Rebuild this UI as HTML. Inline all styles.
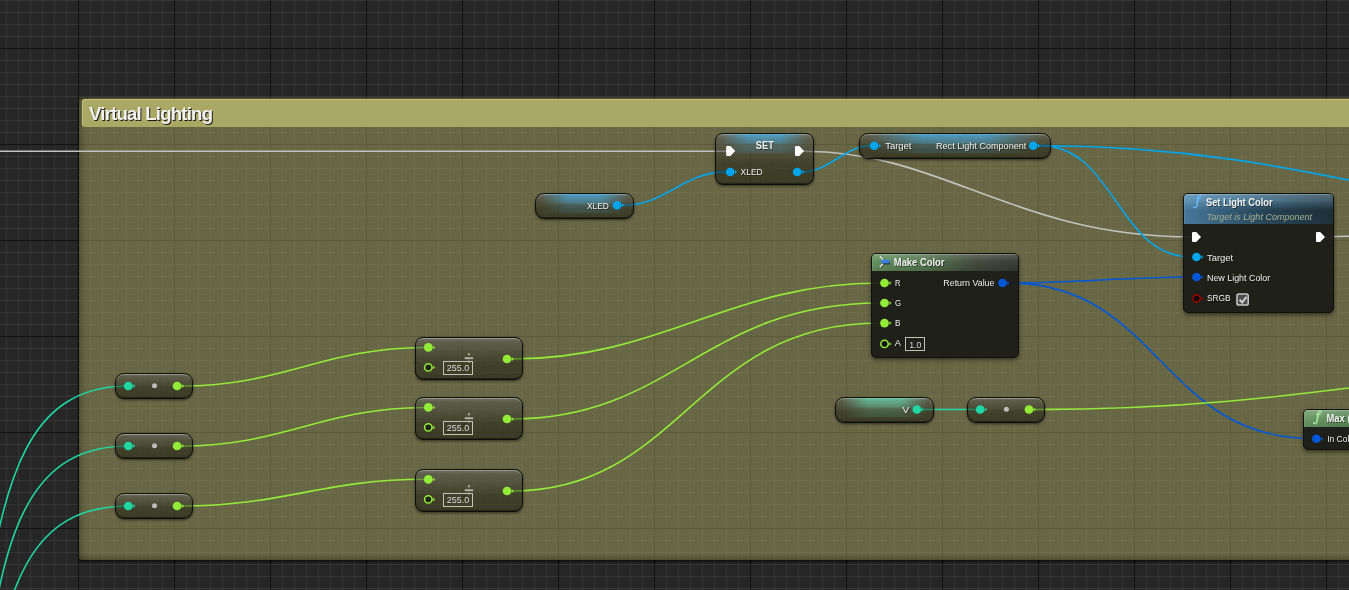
<!DOCTYPE html>
<html><head><meta charset="utf-8"><title>Virtual Lighting</title>
<style>
*{box-sizing:border-box;margin:0;padding:0}
html,body{width:1349px;height:590px;overflow:hidden;background:#262626}
body{position:relative;font-family:"Liberation Sans",sans-serif;color:#e8e8e8}
#grid{position:absolute;left:0;top:0;width:1349px;height:590px;
 background-image:
  linear-gradient(to right,#111 1px,transparent 1px),
  linear-gradient(to bottom,#111 1px,transparent 1px),
  linear-gradient(to right,#353535 1px,transparent 1px),
  linear-gradient(to bottom,#353535 1px,transparent 1px);
 background-size:96px 96px,96px 96px,12px 12px,12px 12px;
 background-position:78px 0,0 48px,6px 0,0 0}
#comment{position:absolute;left:79px;top:97px;width:1290px;height:463px;background:rgba(170,168,100,0.5);
 border-radius:3px;box-shadow:0 2px 3px rgba(0,0,0,.6),inset 7px 0 8px -5px rgba(0,0,0,.28),inset 0 -6px 6px -4px rgba(0,0,0,.3),inset 0 3px 2px -1px rgba(0,0,0,.35)}
#chead{position:absolute;left:3px;top:2px;right:0;height:28px;background:#aaa865;border-radius:3px 0 0 3px;box-shadow:inset 1px 1px 0 rgba(255,255,160,.3)}
#ctitle{position:absolute;left:10px;top:5.5px;font-weight:bold;font-size:18.6px;color:#f2f2f2;text-shadow:1px 1px 0 #1a1a1a;white-space:nowrap;letter-spacing:-0.8px;line-height:21px}
.node{position:absolute;overflow:hidden;border:1px solid #0e0e0c;box-shadow:0 1px 3px rgba(0,0,0,.55)}
.cn{background:linear-gradient(to bottom,rgba(255,255,255,.26) 0,rgba(255,255,255,.15) 10%,rgba(255,255,255,.07) 38%,rgba(255,255,255,0) 60%,rgba(0,0,0,.1) 100%),rgba(15,15,10,.44);
 box-shadow:0 1px 3px rgba(0,0,0,.55), inset 0 1px 0 rgba(255,255,255,.28), inset 0 -1px 1px rgba(0,0,0,.4)}
.glow{position:absolute;left:0;right:0;top:0;height:20px;
 background:linear-gradient(to bottom,rgba(var(--g),.75) 0,rgba(var(--g),.42) 46%,rgba(var(--g),.22) 50%,rgba(var(--g),.15) 92%,rgba(var(--g),0) 100%);
 -webkit-mask-image:linear-gradient(to right,transparent 5%,#000 33%,#000 67%,transparent 95%);mask-image:linear-gradient(to right,transparent 5%,#000 33%,#000 67%,transparent 95%)}
.fn{border-radius:5px;background:rgba(26,27,22,.93);box-shadow:0 2px 4px rgba(0,0,0,.5)}
.hd{position:absolute;left:0;top:0;right:0;box-shadow:inset 0 1px 0 rgba(255,255,255,.22),inset 1px 0 0 rgba(255,255,255,.08)}
.hblue{background:linear-gradient(to bottom,rgba(255,255,255,.18) 0,rgba(255,255,255,.05) 35%,rgba(255,255,255,0) 52%),linear-gradient(to right,#5088ae 0,#41718f 40%,#35586d 75%,#2f4957 100%)}
.hblue::after{content:"";position:absolute;left:0;top:0;right:0;bottom:0;background:linear-gradient(to bottom,rgba(0,0,0,0) 22%,rgba(0,0,0,.36) 56%,rgba(0,0,0,.3) 100%);-webkit-mask-image:linear-gradient(to right,rgba(0,0,0,.3) 0,#000 55%);mask-image:linear-gradient(to right,rgba(0,0,0,.3) 0,#000 55%)}
.hgreen{background:linear-gradient(to bottom,rgba(255,255,255,.18) 0,rgba(255,255,255,.02) 45%,rgba(0,0,0,.12) 100%),linear-gradient(to right,#63905f 0,#55784f 35%,rgba(70,78,64,.9) 70%,rgba(58,60,54,.9) 100%)}
.hgreen2{background:linear-gradient(to bottom,rgba(255,255,255,.18) 0,rgba(255,255,255,.02) 45%,rgba(0,0,0,.12) 100%),linear-gradient(to right,#6c9a66 0,#5b8557 100%)}
svg{position:absolute;left:0;top:0;overflow:hidden}
svg text{font-family:"Liberation Sans",sans-serif;white-space:pre}
#ctitle{will-change:transform}
svg text.sh{text-shadow:1px 1px 0 rgba(0,0,0,.45)}
.ov{will-change:transform}
svg text.fi{font-family:"DejaVu Serif",serif;font-style:italic;font-size:12.5px}
</style></head><body>
<div id="grid"></div>
<div id="comment"><div id="chead"></div><div id="ctitle">Virtual Lighting</div></div>
<svg width="1349" height="590" viewBox="0 0 1349 590" fill="none" stroke-linecap="round">
<path d="M-2,151.2 L728,151.2" stroke="#c2c2c0" stroke-width="1.6"/>
<path d="M801.0,151.2 L804.0,151.2 C942.7,151.2 1014.5,236.8 1192.0,236.8 L1195.0,236.8" stroke="#c2c2c0" stroke-width="1.6"/>
<path d="M1322,236.8 L1351,236.2" stroke="#c2c2c0" stroke-width="1.6"/>
<path d="M621.0,205.2 L624.0,205.2 C666.0,205.2 683.6,171.9 725.6,171.9 L728.6,171.9" stroke="#00a4ea" stroke-width="1.6"/>
<path d="M800.0,171.8 L803.0,171.8 C828.8,171.8 845.2,145.7 871.0,145.7 L874.0,145.7" stroke="#00a4ea" stroke-width="1.6"/>
<path d="M1037.0,145.6 L1040.0,145.6 C1115.5,145.6 1116.5,257.0 1192.0,257.0 L1195.0,257.0" stroke="#00a4ea" stroke-width="1.6"/>
<path d="M1037.0,145.6 L1040.0,145.6 C1330.3,145.6 1467.4,235.2 1757.7,235.2 L1760.7,235.2" stroke="#00a4ea" stroke-width="1.6"/>
<path d="M1006.5,283.0 L1009.5,283.0 C1069.5,283.0 1132.0,277.0 1192.0,277.0 L1195.0,277.0" stroke="#0058d6" stroke-width="1.6"/>
<path d="M1006.0,283.0 L1009.0,283.0 C1158.8,283.0 1162.2,438.5 1312.0,438.5 L1315.0,438.5" stroke="#0058d6" stroke-width="1.6"/>
<path d="M509.0,359.0 L512.0,359.0 C662.4,359.0 729.6,283.0 880.0,283.0 L883.0,283.0" stroke="#94ea38" stroke-width="1.6"/>
<path d="M509.0,419.0 L512.0,419.0 C672.4,419.0 705.3,303.0 880.0,303.0 L883.0,303.0" stroke="#94ea38" stroke-width="1.6"/>
<path d="M509.0,491.0 L512.0,491.0 C680.9,491.0 695.5,323.0 880.0,323.0 L883.0,323.0" stroke="#94ea38" stroke-width="1.6"/>
<path d="M179.6,386.0 L182.6,386.0 C282.2,386.0 324.9,347.5 424.5,347.5 L427.5,347.5" stroke="#94ea38" stroke-width="1.6"/>
<path d="M179.6,446.0 L182.6,446.0 C282.2,446.0 324.9,407.5 424.5,407.5 L427.5,407.5" stroke="#94ea38" stroke-width="1.6"/>
<path d="M179.6,506.0 L182.6,506.0 C282.2,506.0 324.9,479.2 424.5,479.2 L427.5,479.2" stroke="#94ea38" stroke-width="1.6"/>
<path d="M1031.0,409.6 L1034.0,409.6 C1326.7,409.6 1439.2,358.0 1731.9,358.0 L1734.9,358.0" stroke="#94ea38" stroke-width="1.6"/>
<path d="M-155.5,795.3 L-152.5,795.3 C50.2,795.3 -76.7,386.2 126.0,386.2 L129.0,386.2" stroke="#1fd6a4" stroke-width="1.6"/>
<path d="M-155.0,864.0 L-152.0,864.0 C56.3,864.0 -82.3,446.2 126.0,446.2 L129.0,446.2" stroke="#1fd6a4" stroke-width="1.6"/>
<path d="M-147.4,848.0 L-144.4,848.0 C49.8,848.0 -68.2,506.2 126.0,506.2 L129.0,506.2" stroke="#1fd6a4" stroke-width="1.6"/>
<path d="M920,409.5 L978,409.5" stroke="#1fd6a4" stroke-width="1.6"/>
</svg>
<div class="node cn " style="left:715px;top:133px;width:99px;height:52px;border-radius:8px"><div class="glow" style="--g:70,175,230"></div></div>
<div class="node cn " style="left:535px;top:193px;width:99px;height:26px;border-radius:9px"><div class="glow" style="--g:70,175,230"></div></div>
<div class="node cn " style="left:859px;top:133px;width:192px;height:26px;border-radius:9px"><div class="glow" style="--g:70,175,230"></div></div>
<div class="node fn" style="left:1183px;top:193px;width:151px;height:120px"><div class="hd hblue" style="height:30px"></div></div>
<div class="node fn" style="left:871px;top:253px;width:148px;height:105px"><div class="hd hgreen" style="height:17px"></div></div>
<div class="node cn " style="left:415px;top:337px;width:108px;height:43px;border-radius:8px"></div>
<div class="node cn " style="left:415px;top:397px;width:108px;height:43px;border-radius:8px"></div>
<div class="node cn " style="left:415px;top:469px;width:108px;height:43px;border-radius:8px"></div>
<div class="node cn " style="left:115px;top:373px;width:78px;height:26px;border-radius:9px"></div>
<div class="node cn " style="left:115px;top:433px;width:78px;height:26px;border-radius:9px"></div>
<div class="node cn " style="left:115px;top:493px;width:78px;height:26px;border-radius:9px"></div>
<div class="node cn " style="left:835px;top:397px;width:99px;height:26px;border-radius:9px"><div class="glow" style="--g:105,215,180"></div></div>
<div class="node cn " style="left:967px;top:397px;width:78px;height:26px;border-radius:9px"></div>
<div class="node fn" style="left:1303px;top:409px;width:60px;height:41px"><div class="hd hgreen2" style="height:17px"></div></div>
<svg class="ov" width="1349" height="590" viewBox="0 0 1349 590">
<path d="M727.2,146.0 h3.2 l4.8,5 l-4.8,5 h-3.2 a1,1 0 0 1 -1,-1 v-8 a1,1 0 0 1 1,-1z" fill="#fff"/>
<path d="M796.0,146.0 h3.2 l4.8,5 l-4.8,5 h-3.2 a1,1 0 0 1 -1,-1 v-8 a1,1 0 0 1 1,-1z" fill="#fff"/>
<text class="sh" x="755.8" y="148.7" font-size="10.2" font-weight="bold" font-style="normal" fill="#f0f0f0" textLength="18.0" lengthAdjust="spacingAndGlyphs">SET</text>
<path d="M735.0,170.1 L737.3,172.0 L735.0,173.9Z" fill="#00a4ea" opacity=".85"/><ellipse cx="730.2" cy="172" rx="4.4" ry="4.3" fill="#00a4ea"/>
<path d="M802.0,170.1 L804.3,172.0 L802.0,173.9Z" fill="#00a4ea" opacity=".85"/><ellipse cx="797.2" cy="172" rx="4.4" ry="4.3" fill="#00a4ea"/>
<text class="sh" x="740.6" y="174.8" font-size="9.5" font-weight="normal" font-style="normal" fill="#f0f0f0" textLength="22.1" lengthAdjust="spacingAndGlyphs">XLED</text>
<text class="sh" x="587.0" y="208.8" font-size="9.5" font-weight="normal" font-style="normal" fill="#f0f0f0" textLength="21.9" lengthAdjust="spacingAndGlyphs">XLED</text>
<path d="M621.9,203.3 L624.2,205.2 L621.9,207.1Z" fill="#00a4ea" opacity=".85"/><ellipse cx="617.1" cy="205.2" rx="4.4" ry="4.3" fill="#00a4ea"/>
<path d="M879.0,143.9 L881.3,145.8 L879.0,147.7Z" fill="#00a4ea" opacity=".85"/><ellipse cx="874.2" cy="145.8" rx="4.4" ry="4.3" fill="#00a4ea"/>
<text class="sh" x="885.2" y="149.4" font-size="9.5" font-weight="normal" font-style="normal" fill="#f0f0f0" textLength="26.2" lengthAdjust="spacingAndGlyphs">Target</text>
<text class="sh" x="936.0" y="149.4" font-size="9.5" font-weight="normal" font-style="normal" fill="#f0f0f0" textLength="90.3" lengthAdjust="spacingAndGlyphs">Rect Light Component</text>
<path d="M1038.0,143.9 L1040.3,145.8 L1038.0,147.7Z" fill="#00a4ea" opacity=".85"/><ellipse cx="1033.2" cy="145.8" rx="4.4" ry="4.3" fill="#00a4ea"/>
<text x="1195.4" y="205" class="fi" fill="#6cbcf5" stroke="#6cbcf5" stroke-width=".4">ƒ</text>
<text class="sh" x="1206.0" y="205.8" font-size="10.5" font-weight="bold" font-style="normal" fill="#f0f0f0" textLength="66.5" lengthAdjust="spacingAndGlyphs">Set Light Color</text>
<text x="1206.6" y="220.3" font-size="9.7" font-weight="normal" font-style="italic" fill="#a6ae92" textLength="105.4" lengthAdjust="spacingAndGlyphs">Target is Light Component</text>
<path d="M1193.0,232.0 h3.2 l4.8,5 l-4.8,5 h-3.2 a1,1 0 0 1 -1,-1 v-8 a1,1 0 0 1 1,-1z" fill="#fff"/>
<path d="M1317.0,232.0 h3.2 l4.8,5 l-4.8,5 h-3.2 a1,1 0 0 1 -1,-1 v-8 a1,1 0 0 1 1,-1z" fill="#fff"/>
<path d="M1201.3,255.1 L1203.6,257.0 L1201.3,258.9Z" fill="#00a4ea" opacity=".85"/><ellipse cx="1196.5" cy="257" rx="4.4" ry="4.3" fill="#00a4ea"/>
<text class="sh" x="1207.0" y="260.9" font-size="9.5" font-weight="normal" font-style="normal" fill="#f0f0f0" textLength="26.2" lengthAdjust="spacingAndGlyphs">Target</text>
<path d="M1201.3,275.1 L1203.6,277.0 L1201.3,278.9Z" fill="#0058d6" opacity=".85"/><ellipse cx="1196.5" cy="277" rx="4.4" ry="4.3" fill="#0058d6"/>
<text class="sh" x="1207.0" y="281.0" font-size="9.5" font-weight="normal" font-style="normal" fill="#f0f0f0" textLength="63.2" lengthAdjust="spacingAndGlyphs">New Light Color</text>
<path d="M1201.3,296.6 L1203.6,298.5 L1201.3,300.4Z" fill="#960000" opacity=".85"/><ellipse cx="1196.5" cy="298.5" rx="3.7" ry="3.6" fill="#0a0a0a" stroke="#960000" stroke-width="1.6"/>
<text class="sh" x="1207.0" y="301.0" font-size="9.5" font-weight="normal" font-style="normal" fill="#f0f0f0" textLength="23.7" lengthAdjust="spacingAndGlyphs">SRGB</text>
<rect x="1237" y="294" width="11.2" height="11" rx="1.8" fill="#4e4e4e" stroke="#c6c6c6" stroke-width="1.6"/><path d="M1239.6,299.6 l2.6,2.9 l4.2,-5.6" stroke="#d0d0d0" stroke-width="2" fill="none" stroke-linecap="butt"/>
<rect x="881.8" y="261" width="8.2" height="3.6" rx="1.2" fill="rgba(0,0,0,.55)"/><path d="M880.6,257.2 L883.4,260.6 M880.7,267.6 L883.5,264.6" stroke="rgba(0,0,0,.6)" stroke-width="1.4"/><path d="M880,256.4 L882.9,259.8 M880.1,266.9 L883,263.8" stroke="#f2f2f2" stroke-width="1.4"/><rect x="881.3" y="259.8" width="8.2" height="3.4" rx="1.3" fill="#3a80ee"/>
<text class="sh" x="893.8" y="265.8" font-size="10.3" font-weight="bold" font-style="normal" fill="#f0f0f0" textLength="50.7" lengthAdjust="spacingAndGlyphs">Make Color</text>
<path d="M889.3,281.1 L891.6,283.0 L889.3,284.9Z" fill="#94ea38" opacity=".85"/><ellipse cx="884.5" cy="283" rx="4.4" ry="4.3" fill="#94ea38"/>
<text class="sh" x="895.0" y="285.9" font-size="9.5" font-weight="normal" font-style="normal" fill="#f0f0f0" textLength="5.5" lengthAdjust="spacingAndGlyphs">R</text>
<path d="M889.3,301.1 L891.6,303.0 L889.3,304.9Z" fill="#94ea38" opacity=".85"/><ellipse cx="884.5" cy="303" rx="4.4" ry="4.3" fill="#94ea38"/>
<text class="sh" x="895.0" y="305.9" font-size="9.5" font-weight="normal" font-style="normal" fill="#f0f0f0" textLength="6.1" lengthAdjust="spacingAndGlyphs">G</text>
<path d="M889.3,321.2 L891.6,323.1 L889.3,325.0Z" fill="#94ea38" opacity=".85"/><ellipse cx="884.5" cy="323.1" rx="4.4" ry="4.3" fill="#94ea38"/>
<text class="sh" x="895.0" y="326.0" font-size="9.5" font-weight="normal" font-style="normal" fill="#f0f0f0" textLength="5.5" lengthAdjust="spacingAndGlyphs">B</text>
<path d="M889.3,342.0 L891.6,343.9 L889.3,345.8Z" fill="#94ea38" opacity=".85"/><ellipse cx="884.5" cy="343.9" rx="3.7" ry="3.6" fill="#111" stroke="#94ea38" stroke-width="1.6"/>
<text class="sh" x="894.8" y="345.8" font-size="9.5" font-weight="normal" font-style="normal" fill="#f0f0f0" textLength="6.2" lengthAdjust="spacingAndGlyphs">A</text>
<rect x="905.5" y="337.5" width="19" height="13" fill="none" stroke="#c2c2b8" stroke-width="1"/>
<text x="909.2" y="347.8" font-size="9" font-weight="normal" font-style="normal" fill="#d6d6d6" textLength="12.2" lengthAdjust="spacingAndGlyphs">1.0</text>
<text class="sh" x="943.3" y="286.0" font-size="9.5" font-weight="normal" font-style="normal" fill="#f0f0f0" textLength="51.2" lengthAdjust="spacingAndGlyphs">Return Value</text>
<path d="M1007.3,281.1 L1009.6,283.0 L1007.3,284.9Z" fill="#0058d6" opacity=".85"/><ellipse cx="1002.5" cy="283" rx="4.4" ry="4.3" fill="#0058d6"/>
<path d="M433.1,345.5 L435.4,347.4 L433.1,349.3Z" fill="#94ea38" opacity=".85"/><ellipse cx="428.3" cy="347.4" rx="4.4" ry="4.3" fill="#94ea38"/>
<path d="M433.1,365.5 L435.4,367.4 L433.1,369.3Z" fill="#94ea38" opacity=".85"/><ellipse cx="428.3" cy="367.4" rx="3.7" ry="3.6" fill="#22231c" stroke="#94ea38" stroke-width="1.6"/>
<rect x="443.5" y="361.5" width="29" height="13" fill="none" stroke="#c2c2b8" stroke-width="1"/>
<g fill="#b0b0a2"><rect x="464.7" y="357.2" width="8.5" height="2"/><rect x="467.9" y="353.3" width="2" height="2"/><rect x="467.9" y="360.6" width="2" height="2"/></g>
<text x="446.8" y="370.9" font-size="9.2" font-weight="normal" font-style="normal" fill="#dcdcdc" textLength="22.3" lengthAdjust="spacingAndGlyphs">255.0</text>
<path d="M511.8,357.1 L514.1,359.0 L511.8,360.9Z" fill="#94ea38" opacity=".85"/><ellipse cx="507" cy="359" rx="4.4" ry="4.3" fill="#94ea38"/>
<path d="M433.1,405.5 L435.4,407.4 L433.1,409.3Z" fill="#94ea38" opacity=".85"/><ellipse cx="428.3" cy="407.4" rx="4.4" ry="4.3" fill="#94ea38"/>
<path d="M433.1,425.5 L435.4,427.4 L433.1,429.3Z" fill="#94ea38" opacity=".85"/><ellipse cx="428.3" cy="427.4" rx="3.7" ry="3.6" fill="#22231c" stroke="#94ea38" stroke-width="1.6"/>
<rect x="443.5" y="421.5" width="29" height="13" fill="none" stroke="#c2c2b8" stroke-width="1"/>
<g fill="#b0b0a2"><rect x="464.7" y="417.2" width="8.5" height="2"/><rect x="467.9" y="413.3" width="2" height="2"/><rect x="467.9" y="420.6" width="2" height="2"/></g>
<text x="446.8" y="430.9" font-size="9.2" font-weight="normal" font-style="normal" fill="#dcdcdc" textLength="22.3" lengthAdjust="spacingAndGlyphs">255.0</text>
<path d="M511.8,417.1 L514.1,419.0 L511.8,420.9Z" fill="#94ea38" opacity=".85"/><ellipse cx="507" cy="419" rx="4.4" ry="4.3" fill="#94ea38"/>
<path d="M433.1,477.5 L435.4,479.4 L433.1,481.3Z" fill="#94ea38" opacity=".85"/><ellipse cx="428.3" cy="479.4" rx="4.4" ry="4.3" fill="#94ea38"/>
<path d="M433.1,497.5 L435.4,499.4 L433.1,501.3Z" fill="#94ea38" opacity=".85"/><ellipse cx="428.3" cy="499.4" rx="3.7" ry="3.6" fill="#22231c" stroke="#94ea38" stroke-width="1.6"/>
<rect x="443.5" y="493.5" width="29" height="13" fill="none" stroke="#c2c2b8" stroke-width="1"/>
<g fill="#b0b0a2"><rect x="464.7" y="489.2" width="8.5" height="2"/><rect x="467.9" y="485.3" width="2" height="2"/><rect x="467.9" y="492.6" width="2" height="2"/></g>
<text x="446.8" y="502.9" font-size="9.2" font-weight="normal" font-style="normal" fill="#dcdcdc" textLength="22.3" lengthAdjust="spacingAndGlyphs">255.0</text>
<path d="M511.8,489.1 L514.1,491.0 L511.8,492.9Z" fill="#94ea38" opacity=".85"/><ellipse cx="507" cy="491" rx="4.4" ry="4.3" fill="#94ea38"/>
<path d="M133.1,384.1 L135.4,386.0 L133.1,387.9Z" fill="#1fd6a4" opacity=".85"/><ellipse cx="128.3" cy="386" rx="4.4" ry="4.3" fill="#1fd6a4"/>
<circle cx="154.5" cy="385.7" r="2.5" fill="#bdbdbd"/>
<path d="M181.9,384.1 L184.2,386.0 L181.9,387.9Z" fill="#94ea38" opacity=".85"/><ellipse cx="177.1" cy="386" rx="4.4" ry="4.3" fill="#94ea38"/>
<path d="M133.1,444.1 L135.4,446.0 L133.1,447.9Z" fill="#1fd6a4" opacity=".85"/><ellipse cx="128.3" cy="446" rx="4.4" ry="4.3" fill="#1fd6a4"/>
<circle cx="154.5" cy="445.7" r="2.5" fill="#bdbdbd"/>
<path d="M181.9,444.1 L184.2,446.0 L181.9,447.9Z" fill="#94ea38" opacity=".85"/><ellipse cx="177.1" cy="446" rx="4.4" ry="4.3" fill="#94ea38"/>
<path d="M133.1,504.1 L135.4,506.0 L133.1,507.9Z" fill="#1fd6a4" opacity=".85"/><ellipse cx="128.3" cy="506" rx="4.4" ry="4.3" fill="#1fd6a4"/>
<circle cx="154.5" cy="505.7" r="2.5" fill="#bdbdbd"/>
<path d="M181.9,504.1 L184.2,506.0 L181.9,507.9Z" fill="#94ea38" opacity=".85"/><ellipse cx="177.1" cy="506" rx="4.4" ry="4.3" fill="#94ea38"/>
<text class="sh" x="902.6" y="412.8" font-size="9.5" font-weight="normal" font-style="normal" fill="#f0f0f0" textLength="6.7" lengthAdjust="spacingAndGlyphs">V</text>
<path d="M921.7,407.6 L924.0,409.5 L921.7,411.4Z" fill="#1fd6a4" opacity=".85"/><ellipse cx="916.9" cy="409.5" rx="4.4" ry="4.3" fill="#1fd6a4"/>
<path d="M985.0,407.6 L987.3,409.5 L985.0,411.4Z" fill="#1fd6a4" opacity=".85"/><ellipse cx="980.2" cy="409.5" rx="4.4" ry="4.3" fill="#1fd6a4"/>
<circle cx="1006.4" cy="409.2" r="2.5" fill="#bdbdbd"/>
<path d="M1033.8,407.6 L1036.1,409.5 L1033.8,411.4Z" fill="#94ea38" opacity=".85"/><ellipse cx="1029" cy="409.5" rx="4.4" ry="4.3" fill="#94ea38"/>
<text x="1315.6" y="421" class="fi" fill="#a8eea0" stroke="#a8eea0" stroke-width=".4">ƒ</text>
<text class="sh" x="1326.4" y="421.9" font-size="10.3" font-weight="bold" font-style="normal" fill="#f0f0f0" textLength="24.2" lengthAdjust="spacingAndGlyphs">Max (</text>
<path d="M1321.2,436.9 L1323.5,438.8 L1321.2,440.7Z" fill="#0058d6" opacity=".85"/><ellipse cx="1316.4" cy="438.8" rx="4.4" ry="4.3" fill="#0058d6"/>
<text class="sh" x="1327.2" y="441.9" font-size="9.5" font-weight="normal" font-style="normal" fill="#f0f0f0" textLength="22.1" lengthAdjust="spacingAndGlyphs">In Col</text>
</svg>
</body></html>
